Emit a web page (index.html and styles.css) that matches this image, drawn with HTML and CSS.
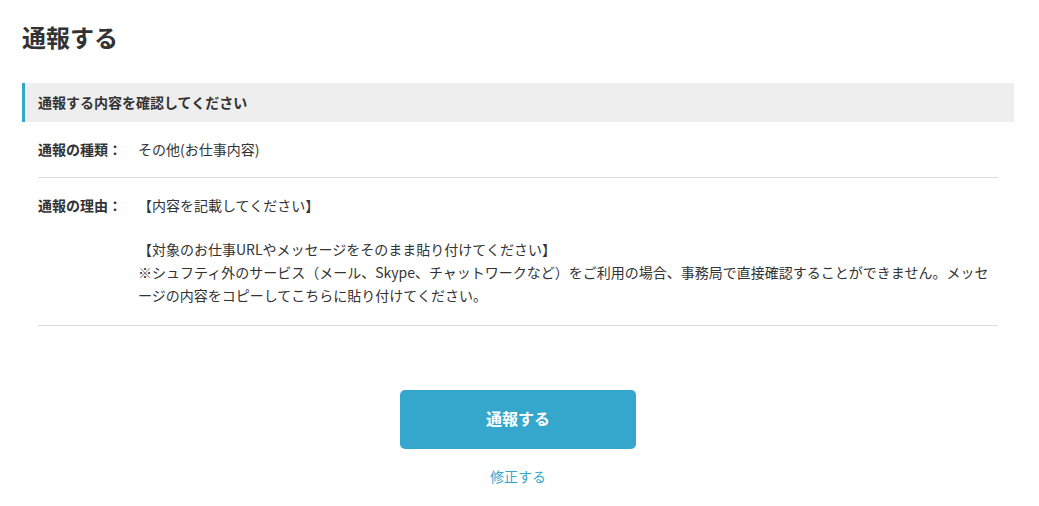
FILE: index.html
```html
<!DOCTYPE html>
<html lang="ja">
<head>
<meta charset="utf-8">
<title>通報する</title>
<link rel="stylesheet" href="styles.css">
</head>
<body>
<div class="page">
  <h1 class="title">通報する</h1>
  <div class="section-head">通報する内容を確認してください</div>
  <dl class="rows">
    <div class="row">
      <dt class="label">通報の種類：</dt>
      <dd class="value"><p class="para">その他(お仕事内容)</p></dd>
    </div>
    <div class="row">
      <dt class="label">通報の理由：</dt>
      <dd class="value">
        <p class="para">【内容を記載してください】</p>
        <p class="para gap">【対象のお仕事URLやメッセージをそのまま貼り付けてください】<br>※シュフティ外のサービス（メール、Skype、チャットワークなど）をご利用の場合、事務局で直接確認することができません。メッセージの内容をコピーしてこちらに貼り付けてください。</p>
      </dd>
    </div>
  </dl>
  <div class="actions">
    <button class="btn-submit" type="button">通報する</button>
    <a class="link-edit" href="#">修正する</a>
  </div>
</div>
</body>
</html>
```

FILE: styles.css
```css
* { box-sizing: border-box; }
html, body { margin: 0; padding: 0; background: #fff; }
body {
  font-family: "Noto Sans CJK JP", "Noto Sans", "Liberation Sans", sans-serif;
  color: #333;
  font-size: 14px;
}
.page {
  width: 992px;
  margin: 0 0 0 22px;
}
.title {
  margin: 0;
  padding-top: 23px;
  font-size: 24px;
  line-height: 28px;
  font-weight: 700;
  color: #333;
}
.section-head {
  margin-top: 32px;
  height: 39px;
  background: #eeeeee;
  border-left: 3px solid #35a7cd;
  padding-left: 13px;
  font-size: 14px;
  font-weight: 700;
  line-height: 39px;
}
.rows {
  margin: 0 16px;
  padding: 0;
}
.row {
  display: flex;
  padding: 16px 0 16px;
  border-bottom: 1px solid #dddddd;
}
.row + .row {
  padding-bottom: 18px;
}
.label {
  flex: 0 0 100px;
  margin: 0;
  font-weight: 700;
  line-height: 23px;
}
.value {
  flex: 1 1 auto;
  margin: 0;
  line-height: 23px;
}
.para { margin: 0; }
.para.gap { margin-top: 21px; }
.actions {
  display: flex;
  flex-direction: column;
  align-items: center;
  padding-top: 64px;
}
.btn-submit {
  width: 236px;
  height: 59px;
  border: none;
  border-radius: 5px;
  background: #35a7cd;
  color: #fff;
  font-family: inherit;
  font-size: 16px;
  font-weight: 700;
  padding: 0 0 3px;
  cursor: pointer;
}
.link-edit {
  margin-top: 17px;
  color: #35a7cd;
  text-decoration: none;
  font-size: 14px;
  line-height: 20px;
}
```
